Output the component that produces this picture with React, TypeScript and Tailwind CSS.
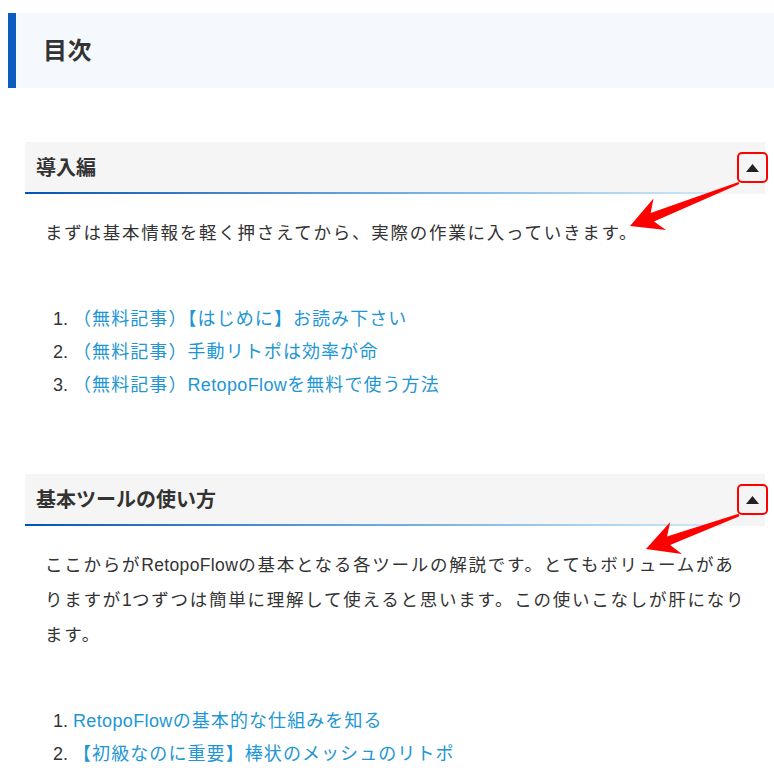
import React from 'react';

const sections = [
  {
    title: '導入編',
    lead: ['まずは基本情報を軽く押さえてから、実際の作業に入っていきます。'],
    items: [
      '（無料記事）【はじめに】お読み下さい',
      '（無料記事）手動リトポは効率が命',
      '（無料記事）RetopoFlowを無料で使う方法',
    ],
    arrow: { x1: 739, y1: 183, x2: 630, y2: 226 },
  },
  {
    title: '基本ツールの使い方',
    lead: [
      'ここからがRetopoFlowの基本となる各ツールの解説です。とてもボリュームがあ',
      'りますが1つずつは簡単に理解して使えると思います。この使いこなしが肝になり',
      'ます。',
    ],
    items: ['RetopoFlowの基本的な仕組みを知る', '【初級なのに重要】棒状のメッシュのリトポ'],
    arrow: { x1: 739, y1: 515, x2: 646, y2: 549 },
  },
];

// latin runs are set without the extra letter spacing
const Txt = ({ text }: { text: string }) => (
  <>
    {text.split(/([A-Za-z0-9]+)/).map((part, k) =>
      /^[A-Za-z0-9]+$/.test(part) ? (
        <span key={k} className="tracking-[0.02em]">
          {part}
        </span>
      ) : (
        <React.Fragment key={k}>{part}</React.Fragment>
      )
    )}
  </>
);

const Arrow = ({ x1, y1, x2, y2 }: { x1: number; y1: number; x2: number; y2: number }) => {
  const dx = x2 - x1;
  const dy = y2 - y1;
  const len = Math.hypot(dx, dy);
  const ux = dx / len;
  const uy = dy / len;
  const px = -uy;
  const py = ux;
  const headLen = 32;
  const headW = 17;
  const bx = x2 - ux * headLen;
  const by = y2 - uy * headLen;
  const cx = x2 - ux * (headLen - 8);
  const cy = y2 - uy * (headLen - 8);
  const pts = [
    [x1 + px * 1.2, y1 + py * 1.2],
    [cx + px * 4.5, cy + py * 4.5],
    [bx + px * headW, by + py * headW],
    [x2, y2],
    [bx - px * headW, by - py * headW],
    [cx - px * 4.5, cy - py * 4.5],
    [x1 - px * 1.2, y1 - py * 1.2],
  ]
    .map((p) => p.join(','))
    .join(' ');
  return <polygon points={pts} fill="#ff0000" />;
};

const App: React.FC = () => {
  return (
    <div
      className="relative w-[774px] h-[772px] overflow-hidden bg-white text-[#333]"
      style={{ fontFamily: '"Liberation Sans", "Noto Sans CJK JP", sans-serif' }}
    >
      <div className="pt-[13px] pl-[8px]">
        <div className="h-[75px] bg-[#f5f8fc] border-l-[8px] border-[#0a5cbf] flex items-center pl-[27px]">
          <h2 className="text-[24px] font-bold tracking-[0.02em]">目次</h2>
        </div>
      </div>

      <div className="pl-[25px] pr-[9px] pt-[54px]">
        {sections.map((s, i) => (
          <section key={i} className={i > 0 ? 'mt-[72px]' : ''}>
            <div className="relative bg-[#f5f5f5]">
              <div className="h-[50px] flex items-center pl-[11px] pt-[2px]">
                <h3 className="text-[20px] font-bold">{s.title}</h3>
              </div>
              <div className="h-[2px] w-[697px] bg-gradient-to-r from-[#0054b4] via-[#6aa8dc] to-[#d2eaf8]" />
              <button className="absolute right-[-3px] top-[10px] w-[31px] h-[31px] border-2 border-[#ff0000] rounded-[5px] flex items-center justify-center">
                <svg width="13" height="8" viewBox="0 0 13 8">
                  <polygon points="6.5,0 13,8 0,8" fill="#222" />
                </svg>
              </button>
            </div>
            <div className="mt-[22px] pl-[20px] pr-[10px] text-[17.5px] leading-[35px] tracking-[0.1em]">
              {s.lead.map((l, j) => (
                <p key={j} className="whitespace-nowrap">
                  <Txt text={l} />
                </p>
              ))}
            </div>
            <ol className="mt-[52px] list-decimal pl-[48px] text-[18px] leading-[33px] tracking-[0.06em]">
              {s.items.map((it, j) => (
                <li key={j} className="marker:text-[#333] marker:tracking-normal">
                  <a href="#" className="text-[#1e96d4]">
                    <Txt text={it} />
                  </a>
                </li>
              ))}
            </ol>
          </section>
        ))}
      </div>

      <svg className="absolute inset-0 pointer-events-none" width="774" height="772">
        {sections.map((s, i) => (
          <Arrow key={i} {...s.arrow} />
        ))}
      </svg>
    </div>
  );
};

export default App;
